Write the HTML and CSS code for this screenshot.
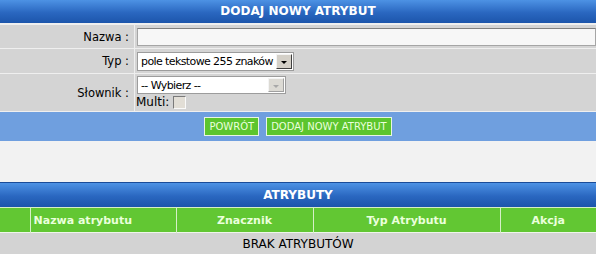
FILE: index.html
```html
<!DOCTYPE html>
<html lang="pl">
<head>
    <meta charset="UTF-8">
    <title>Atrybuty</title>
    <link rel="stylesheet" href="styles.css">
</head>
<body>

    <!-- Dodaj atrybut -->
    <div class="panel">
        <div class="panel-title">DODAJ NOWY ATRYBUT</div>
        <form class="form-grid">
            <label class="form-label" for="attr-name">Nazwa :</label>
            <div class="form-field">
                <input type="text" id="attr-name" class="text-input">
            </div>

            <label class="form-label" for="attr-type">Typ :</label>
            <div class="form-field">
                <div class="select-wrap select-type">
                    <select id="attr-type" class="select-input">
                        <option>pole tekstowe 255 znaków</option>
                    </select>
                    <span class="select-arrow"></span>
                </div>
            </div>

            <label class="form-label" for="attr-dict">Słownik :</label>
            <div class="form-field field-stack">
                <div class="select-wrap select-dict">
                    <select id="attr-dict" class="select-input">
                        <option>-- Wybierz --</option>
                    </select>
                    <span class="select-arrow arrow-off"></span>
                </div>
                <div class="multi-row">
                    <span>Multi:</span>
                    <span class="checkbox"></span>
                </div>
            </div>
        </form>
        <div class="button-bar">
            <button type="button" class="btn">POWRÓT</button>
            <button type="button" class="btn">DODAJ NOWY ATRYBUT</button>
        </div>
    </div>

    <div class="spacer"></div>

    <!-- Lista atrybutow -->
    <div class="panel">
        <div class="panel-title title-dark">ATRYBUTY</div>
        <table class="attr-table">
            <colgroup>
                <col style="width: 30px">
                <col style="width: 146px">
                <col style="width: 137px">
                <col style="width: 187px">
                <col>
            </colgroup>
            <thead>
                <tr>
                    <th></th>
                    <th class="th-left">Nazwa atrybutu</th>
                    <th>Znacznik</th>
                    <th>Typ Atrybutu</th>
                    <th>Akcja</th>
                </tr>
            </thead>
            <tbody>
                <tr>
                    <td colspan="5" class="empty-row">BRAK ATRYBUTÓW</td>
                </tr>
            </tbody>
        </table>
    </div>

</body>
</html>
```

FILE: styles.css
```css
/* Base */
body {
    margin: 0;
    padding: 0;
    background: #fff;
    font-family: 'DejaVu Sans', Verdana, sans-serif;
    font-size: 11px;
    color: #000;
    width: 596px;
}

/* Panel header */
.panel-title {
    height: 23px;
    line-height: 23px;
    text-align: center;
    font-weight: bold;
    font-size: 12px;
    color: #fff;
    background: linear-gradient(#4d92e4, #2a67c0 55%, #1c55ab);
}

.title-dark {
    height: 24px;
    line-height: 24px;
    border-top: 1px solid #1a4c98;
}

/* Form */
.form-grid {
    display: grid;
    grid-template-columns: 134px 1fr;
    grid-template-rows: 23px 24px 37px;
    gap: 1px;
    margin: 0;
    padding: 2px 0 1px;
    background: #efefef;
}

.form-label {
    background: #d4d4d4;
    display: flex;
    align-items: center;
    justify-content: flex-end;
    padding-right: 5px;
    font-size: 11.5px;
}

.form-field {
    background: #d4d4d4;
    display: flex;
    align-items: center;
    padding-left: 2px;
}

.field-stack {
    flex-direction: column;
    align-items: flex-start;
    justify-content: flex-start;
    padding-top: 2px;
}

.text-input {
    width: 100%;
    height: 18px;
    box-sizing: border-box;
    margin: 0;
    border: 1px solid #a5a5a5;
    border-top-color: #808080;
    background: #f7f7f7;
    font: inherit;
}

.select-wrap {
    position: relative;
    box-sizing: border-box;
    background: #fff;
    border: 1px solid #9c9c9c;
}

.select-type {
    width: 157px;
    height: 19px;
}

.select-dict {
    width: 149px;
    height: 18px;
}

.select-input {
    appearance: none;
    -webkit-appearance: none;
    width: 100%;
    height: 100%;
    margin: 0;
    padding: 0 0 0 3px;
    border: 0;
    background: transparent;
    font: inherit;
    font-size: 11px;
    letter-spacing: -0.6px;
    color: #000;
}

.select-arrow {
    position: absolute;
    top: 1px;
    right: 1px;
    bottom: 1px;
    width: 16px;
    box-sizing: border-box;
    background: #d4d0c8;
    border: 1px solid;
    border-color: #f4f4f4 #404040 #404040 #f4f4f4;
}

.select-arrow::after {
    content: '';
    position: absolute;
    left: 4px;
    top: 6px;
    border-left: 3px solid transparent;
    border-right: 3px solid transparent;
    border-top: 3px solid #000;
}

.arrow-off {
    background: #dcdad4;
    border-color: #f4f4f4 #a0a0a0 #a0a0a0 #f4f4f4;
}

.arrow-off::after {
    border-top-color: #a8a8a8;
}

.multi-row {
    display: flex;
    align-items: center;
    gap: 4px;
    margin-top: 1px;
    margin-left: -1px;
    font-size: 12px;
}

.checkbox {
    width: 13px;
    height: 13px;
    box-sizing: border-box;
    background: #e2ded6;
    border: 1px solid;
    border-color: #7a7a7a #fafafa #fafafa #7a7a7a;
}

/* Buttons */
.button-bar {
    height: 29px;
    display: flex;
    align-items: center;
    justify-content: center;
    gap: 7px;
    background: #6f9fdf;
}

.btn {
    height: 19px;
    padding: 0 4px;
    margin: 0;
    border: 1px solid #e9f5e4;
    background: #5cc52e;
    color: #eaffdc;
    font-family: 'DejaVu Sans', Verdana, sans-serif;
    font-size: 10px;
    cursor: pointer;
}

.spacer {
    height: 41px;
    background: #f2f2f2;
}

/* Attribute table */
.attr-table {
    width: 100%;
    table-layout: fixed;
    border-collapse: collapse;
}

.attr-table th {
    height: 24px;
    padding: 0;
    border-top: 1px solid #d6efc8;
    border-left: 1px solid #d6efc8;
    background: #62c733;
    color: #eaffdc;
    font-weight: bold;
    font-size: 11px;
    text-align: center;
}

.attr-table th:first-child {
    border-left: 0;
}

.attr-table .th-left {
    text-align: left;
    padding-left: 3px;
}

.empty-row {
    height: 21px;
    padding: 0;
    border-top: 1px solid #eef6ea;
    background: #d3d3d3;
    text-align: center;
    font-size: 12px;
}
```
